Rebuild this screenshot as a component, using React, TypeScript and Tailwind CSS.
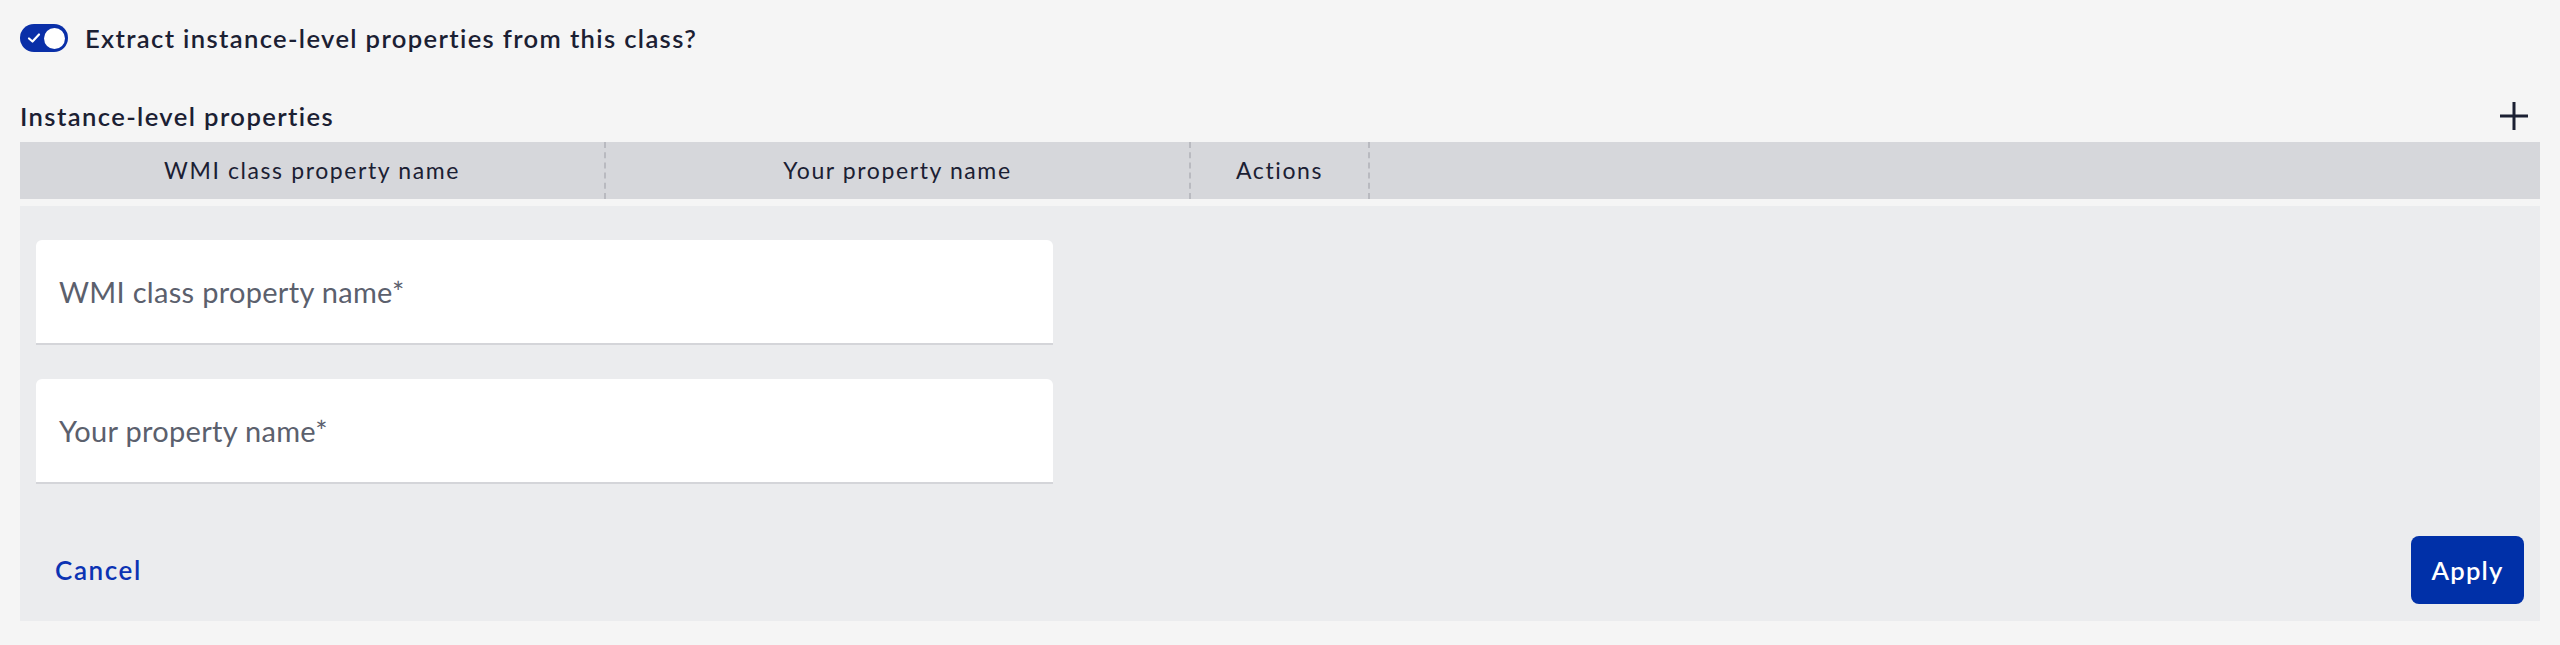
import { useState } from "react";

const columns = [
  { label: "WMI class property name", width: "w-[584px]" },
  { label: "Your property name", width: "w-[585px]" },
  { label: "Actions", width: "w-[179px]" },
];

function Toggle({ on, onChange }: { on: boolean; onChange: () => void }) {
  return (
    <button
      type="button"
      onClick={onChange}
      className="relative flex h-[28px] w-[48px] items-center rounded-full bg-[#0a2fa8] px-[3px]"
    >
      <svg width="14" height="12" viewBox="0 0 14 12" className="ml-[4px]">
        <path d="M2 6.5 L5.5 9.5 L12 2.5" fill="none" stroke="#ffffff" strokeWidth="2.2" strokeLinecap="round" strokeLinejoin="round" />
      </svg>
      <span className={`ml-auto h-[21px] w-[21px] rounded-full bg-white ${on ? "" : "opacity-90"}`} />
    </button>
  );
}

function Field({ label }: { label: string }) {
  return (
    <div className="flex h-[105px] w-[1017px] items-center rounded-t-[6px] border-b-2 border-[#d4d5d9] bg-white pl-[23px]">
      <span className="text-[29px] tracking-[0.3px] text-[#5b606d]">{label}</span>
    </div>
  );
}

export default function App() {
  const [extract, setExtract] = useState(true);

  return (
    <div className="h-[645px] w-full bg-[#f5f5f5] px-[20px] pt-[24px] font-['Lato',sans-serif] text-[#1b2033]">
      <div className="flex h-[28px] items-center gap-[17px]">
        <Toggle on={extract} onChange={() => setExtract(!extract)} />
        <span className="text-[25.6px] font-semibold tracking-[1.35px]">
          Extract instance-level properties from this class?
        </span>
      </div>

      <div className="mt-[48px] mb-[10px] flex h-[32px] items-center justify-between">
        <h2 className="text-[25.6px] font-semibold tracking-[1.4px]">Instance-level properties</h2>
        <button type="button" className="mr-[10px]">
          <svg width="32" height="32" viewBox="0 0 32 32">
            <path d="M16 2 V30 M2 16 H30" stroke="#1b2033" strokeWidth="3" />
          </svg>
        </button>
      </div>

      <div className="flex h-[57px] bg-[#d6d7db]">
        {columns.map((col, i) => (
          <div
            key={col.label}
            className={`flex ${col.width} items-center justify-center text-[23px] tracking-[1.6px] ${i > 0 ? "border-l-2 border-dashed border-[#b9bac0]" : ""}`}
          >
            {col.label}
          </div>
        ))}
        <div className="flex-1 border-l-2 border-dashed border-[#b9bac0]" />
      </div>

      <div className="mt-[7px] flex h-[415px] flex-col bg-[#ebecee] px-[16px] pt-[34px] pb-[17px]">
        <div className="flex flex-col gap-[34px]">
          <Field label="WMI class property name*" />
          <Field label="Your property name*" />
        </div>
        <div className="mt-auto flex items-center justify-between">
          <button type="button" className="px-[19px] text-[26px] font-semibold tracking-[1.6px] text-[#0b33b3]">
            Cancel
          </button>
          <button
            type="button"
            className="h-[68px] w-[113px] rounded-[8px] bg-[#0030a8] text-[25.6px] font-semibold tracking-[1.2px] text-white"
          >
            Apply
          </button>
        </div>
      </div>
    </div>
  );
}
